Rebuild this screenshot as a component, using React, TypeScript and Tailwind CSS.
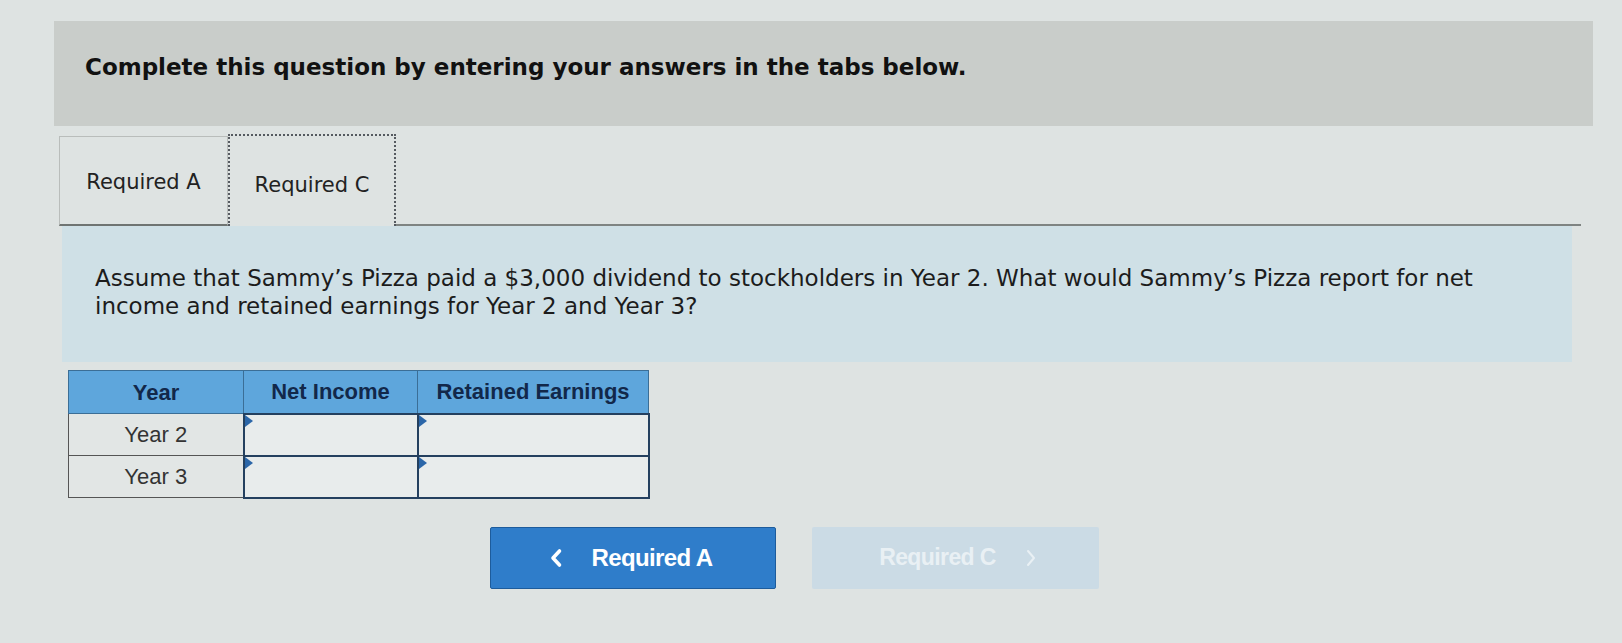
import React from "react";

function InputCell({ w }: { w: string }) {
  return (
    <td className={`${w} p-0 border-2 border-[#24405f] bg-[#e8ecec] relative h-[42px]`}>
      <span className="absolute left-0 top-0 w-0 h-0 border-t-[6px] border-b-[6px] border-l-[8px] border-t-transparent border-b-transparent border-l-[#2b66a8]" />
    </td>
  );
}

export default function App() {
  return (
    <div
      className="w-[1622px] h-[643px] bg-[#dee3e2] overflow-hidden pt-[21px] pl-[54px]"
      style={{ fontFamily: '"DejaVu Sans", Verdana, sans-serif' }}
    >
      <div className="w-[1539px] h-[105px] bg-[#c9cdca] flex items-center pl-[31px] pb-[12px]">
        <h1 className="text-[23px] font-bold text-[#111]">
          Complete this question by entering your answers in the tabs below.
        </h1>
      </div>

      <div className="flex items-end mt-[8px] pl-[5px] w-[1527px]">
        <div className="w-[169px] h-[90px] border border-[#b9bdbb] border-b-2 border-b-[#6f7472] flex items-center justify-center text-[21px] text-[#222] pt-[4px]">
          Required A
        </div>
        <div className="w-[168px] h-[92px] border-2 border-dotted border-[#555a60] border-b-0 flex items-center justify-center text-[21px] text-[#222] pt-[10px]">
          Required C
        </div>
        <div className="flex-1 border-b-2 border-[#7f8482]" />
      </div>

      <div className="ml-[8px] w-[1510px] h-[136px] bg-[#cfe0e6] pl-[33px] pr-[30px] pt-[38px] text-[23px] leading-[28px] text-[#1c1c1c]">
        Assume that Sammy’s Pizza paid a $3,000 dividend to stockholders in Year 2. What would Sammy’s Pizza report for net income and retained earnings for Year 2 and Year 3?
      </div>

      <div className="ml-[14px] mt-[8px]" style={{ fontFamily: '"Liberation Sans", Arial, sans-serif' }}>
        <table className="border-collapse">
          <thead>
            <tr className="bg-[#5ea6dc] h-[43px]">
              <th className="w-[175px] border border-[#3b6e96] text-[22px] font-bold text-[#12284a]">Year</th>
              <th className="w-[174px] border border-[#3b6e96] text-[22px] font-bold text-[#12284a]">Net Income</th>
              <th className="w-[231px] border border-[#3b6e96] text-[22px] font-bold text-[#12284a]">Retained Earnings</th>
            </tr>
          </thead>
          <tbody>
            <tr>
              <td className="w-[175px] h-[42px] border border-[#555] bg-[#e2e6e5] text-center text-[22px] text-[#333]">Year 2</td>
              <InputCell w="w-[174px]" />
              <InputCell w="w-[231px]" />
            </tr>
            <tr>
              <td className="w-[175px] h-[42px] border border-[#555] bg-[#e2e6e5] text-center text-[22px] text-[#333]">Year 3</td>
              <InputCell w="w-[174px]" />
              <InputCell w="w-[231px]" />
            </tr>
          </tbody>
        </table>
      </div>

      <div className="flex gap-[36px] ml-[436px] mt-[28px]" style={{ fontFamily: '"Liberation Sans", Arial, sans-serif' }}>
        <button className="w-[286px] h-[62px] bg-[#2f7dca] border border-[#1d5c9c] rounded-[2px] flex items-center justify-center gap-[28px] text-white text-[24px] font-bold tracking-[-0.6px] pr-[4px]">
          <svg width="14" height="20" viewBox="0 0 14 20"><path d="M10.5 3 L4 10 L10.5 17" fill="none" stroke="white" strokeWidth="3.6" strokeLinecap="round" strokeLinejoin="round" /></svg>
          <span>Required A</span>
        </button>
        <button className="w-[287px] h-[62px] bg-[#cbdbe5] rounded-[2px] flex items-center justify-center gap-[30px] text-[#e9f0f4] text-[23px] font-bold tracking-[-0.6px] pl-[4px]">
          <span>Required C</span>
          <svg width="10" height="18" viewBox="0 0 10 18"><path d="M2 2 L8 9 L2 16" fill="none" stroke="#e9f0f4" strokeWidth="2" strokeLinecap="round" strokeLinejoin="round" /></svg>
        </button>
      </div>
    </div>
  );
}
